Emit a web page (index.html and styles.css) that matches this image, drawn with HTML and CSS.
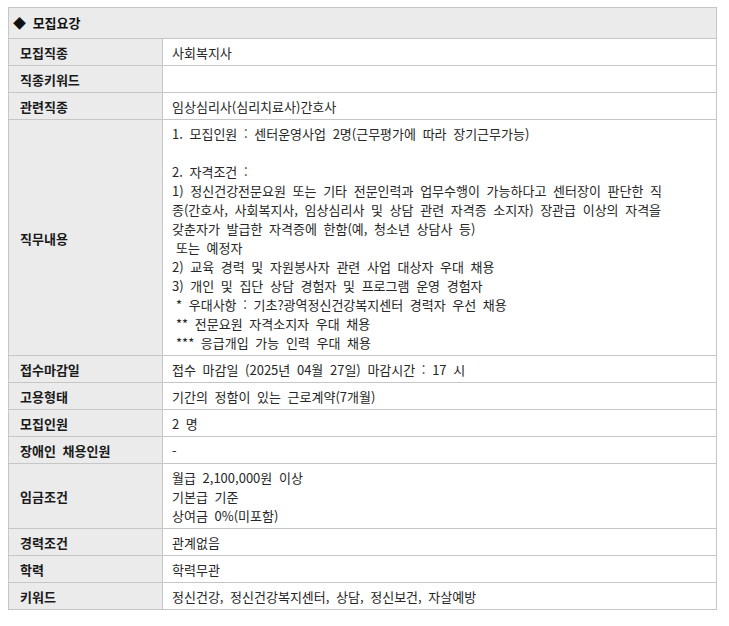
FILE: index.html
```html
<!DOCTYPE html>
<html lang="ko">
<head>
<meta charset="utf-8">
<title>모집요강</title>
<link rel="stylesheet" href="styles.css">
</head>
<body>
<table class="recruit">
  <colgroup>
    <col class="col-label">
    <col class="col-value">
  </colgroup>
  <tr>
    <th class="title" colspan="2">◆ 모집요강</th>
  </tr>
  <tr>
    <th class="label">모집직종</th>
    <td class="value">사회복지사</td>
  </tr>
  <tr>
    <th class="label">직종키워드</th>
    <td class="value"></td>
  </tr>
  <tr>
    <th class="label">관련직종</th>
    <td class="value">임상심리사(심리치료사)간호사</td>
  </tr>
  <tr>
    <th class="label">직무내용</th>
    <td class="value pre">1. 모집인원 : 센터운영사업 2명(근무평가에 따라 장기근무가능)

2. 자격조건 :
1) 정신건강전문요원 또는 기타 전문인력과 업무수행이 가능하다고 센터장이 판단한 직<br>종(간호사, 사회복지사, 임상심리사 및 상담 관련 자격증 소지자) 장관급 이상의 자격을<br>갖춘자가 발급한 자격증에 한함(예, 청소년 상담사 등)
<span class="indent">또는 예정자</span>
2) 교육 경력 및 자원봉사자 관련 사업 대상자 우대 채용
3) 개인 및 집단 상담 경험자 및 프로그램 운영 경험자
<span class="indent">* 우대사항 : 기초?광역정신건강복지센터 경력자 우선 채용</span>
<span class="indent">** 전문요원 자격소지자 우대 채용</span>
<span class="indent">*** 응급개입 가능 인력 우대 채용</span></td>
  </tr>
  <tr>
    <th class="label">접수마감일</th>
    <td class="value">접수 마감일 (2025년 04월 27일) 마감시간 : 17 시</td>
  </tr>
  <tr>
    <th class="label">고용형태</th>
    <td class="value">기간의 정함이 있는 근로계약(7개월)</td>
  </tr>
  <tr>
    <th class="label">모집인원</th>
    <td class="value">2 명</td>
  </tr>
  <tr>
    <th class="label">장애인 채용인원</th>
    <td class="value">-</td>
  </tr>
  <tr>
    <th class="label">임금조건</th>
    <td class="value pre">월급 2,100,000원 이상
기본급 기준
상여금 0%(미포함)</td>
  </tr>
  <tr>
    <th class="label">경력조건</th>
    <td class="value">관계없음</td>
  </tr>
  <tr>
    <th class="label">학력</th>
    <td class="value">학력무관</td>
  </tr>
  <tr>
    <th class="label">키워드</th>
    <td class="value">정신건강, 정신건강복지센터, 상담, 정신보건, 자살예방</td>
  </tr>
</table>
</body>
</html>
```

FILE: styles.css
```css
html, body {
  background: #ffffff;
}

body {
  margin: 7px 8px;
  font-family: "Noto Sans CJK KR", "Noto Sans", sans-serif;
  font-size: 13px;
  color: #262626;
}

.recruit {
  border-collapse: collapse;
  table-layout: fixed;
  width: 709px;
}

.col-label {
  width: 154px;
}

.recruit th,
.recruit td {
  border: 1px solid #c6c6c6;
  line-height: 19px;
  text-align: left;
  vertical-align: middle;
  word-spacing: 3px;
}

.title {
  background: #ebebeb;
  color: #111111;
  font-weight: bold;
  padding: 5px 4px 6px 4px;
}

.label {
  background: #ebebeb;
  color: #1a1a1a;
  font-weight: bold;
  padding: 4px 10px 3px 11px;
  word-spacing: 2px;
}

.value {
  background: #ffffff;
  padding: 4px 9px 3px 9px;
  height: 19px;
}

.pre {
  white-space: pre-wrap;
}

.indent {
  padding-left: 4px;
}
```
